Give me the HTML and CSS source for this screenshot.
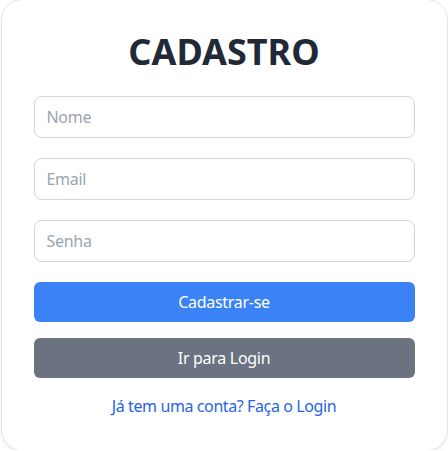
FILE: index.html
```html
<!DOCTYPE html>
<html lang="pt-BR">
<head>
<meta charset="utf-8">
<title>Cadastro</title>
<link rel="stylesheet" href="styles.css">
</head>
<body>
<div class="card">
  <h1 class="title">CADASTRO</h1>
  <form class="form">
    <input class="field" type="text" placeholder="Nome">
    <input class="field" type="email" placeholder="Email">
    <input class="field" type="password" placeholder="Senha">
    <button class="btn btn-primary" type="button">Cadastrar-se</button>
    <button class="btn btn-secondary" type="button">Ir para Login</button>
  </form>
  <p class="footer"><a class="link" href="#">Já tem uma conta? Faça o Login</a></p>
</div>
</body>
</html>
```

FILE: styles.css
```css
* { box-sizing: border-box; }
html, body { margin: 0; padding: 0; background: #ffffff; }
body {
  font-family: "Noto Sans", "Open Sans", sans-serif;
  font-size: 16px;
  line-height: 24px;
}
.card {
  width: 445px;
  margin: 0 auto;
  background: #fff;
  border-radius: 20px;
  padding: 32px;
  box-shadow: 0 0 0 1px #e2e4e8, 0 2px 4px rgba(0,0,0,0.08);
}
.title {
  margin: 0 0 24px;
  text-align: center;
  font-size: 36px;
  line-height: 40px;
  font-weight: 700;
  color: #1f2937;
}
.form { display: flex; flex-direction: column; }
.field {
  display: block;
  width: 100%;
  height: 42px;
  margin: 0 0 20px;
  padding: 8px 12px;
  border: 1px solid #d1d5db;
  border-radius: 8px;
  font: inherit;
  letter-spacing: -0.3px;
  color: #111827;
  outline: none;
}
.field::placeholder { color: #9ca3af; }
.btn {
  display: block;
  width: 100%;
  height: 40px;
  padding: 8px;
  border: 0;
  border-radius: 6px;
  font: inherit;
  letter-spacing: -0.3px;
  color: #fff;
  cursor: pointer;
}
.btn-primary { background: #3b82f6; margin-bottom: 16px; }
.btn-secondary { background: #6b7280; }
.footer { margin: 16px 0 0; text-align: center; letter-spacing: -0.4px; }
.link { color: #2563eb; text-decoration: none; }
```
